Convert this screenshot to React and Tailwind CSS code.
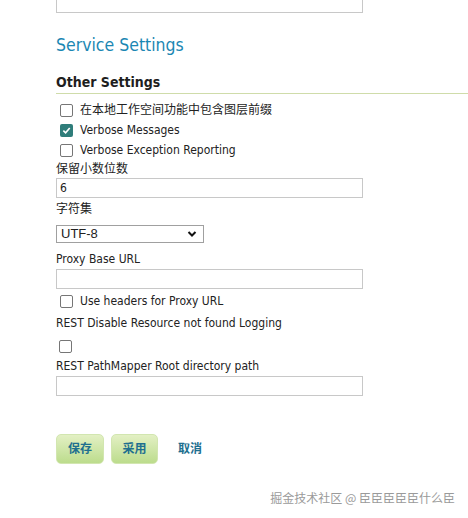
import React from "react";

const font = { fontFamily: '"DejaVu Sans Condensed", "DejaVu Sans", "Noto Sans CJK SC", sans-serif' };

function Check({ checked, label }) {
  return (
    <label className="flex items-center h-5 pl-1 gap-[7px]">
      {checked ? (
        <span className="w-[13px] h-[13px] rounded-[2px] bg-[#2f7d7a] flex items-center justify-center">
          <svg width="9" height="9" viewBox="0 0 10 10">
            <path d="M1.5 5.2 L4 7.6 L8.6 2.2" stroke="white" strokeWidth="1.8" fill="none" />
          </svg>
        </span>
      ) : (
        <span className="w-[13px] h-[13px] rounded-[2px] border border-[#767676] bg-white" />
      )}
      {label && <span className="leading-[20px]">{label}</span>}
    </label>
  );
}

function TextInput({ value }) {
  return (
    <div className="w-[307px] h-[20px] border border-[#c8c8c8] bg-white flex items-center px-[3px] text-[12px] text-[#222]">
      {value}
    </div>
  );
}

export default function App() {
  return (
    <div className="relative w-[468px] h-[518px] bg-white overflow-hidden text-[12px] text-[#222]" style={font}>
      <div className="pl-[56px]">
        <div className="w-[307px] h-[13px] border border-t-0 border-[#c8c8c8]" />
        <h2 className="mt-[20px] text-[17.5px] leading-[24px] text-[#1b87b3]">Service Settings</h2>
        <div className="mt-[15px] border-b border-[#cfdcaa] pb-[1px]">
          <h3 className="text-[14px] font-bold leading-[20px] text-[#1e1e1e]">Other Settings</h3>
        </div>
        <div className="mt-[6px] flex flex-col">
          <Check label="在本地工作空间功能中包含图层前缀" />
          <Check checked label="Verbose Messages" />
          <Check label="Verbose Exception Reporting" />
          <div className="h-[18px] leading-[18px]">保留小数位数</div>
          <TextInput value="6" />
          <div className="mt-[1px] h-[20px] leading-[20px]">字符集</div>
          <div className="mt-[6px] w-[148px] h-[18px] border border-[#a0a0a0] flex items-center justify-between pl-[4px] pr-[6px] text-[13px]" style={{ fontFamily: '"Liberation Sans", sans-serif' }}>
            <span>UTF-8</span>
            <svg width="10" height="8" viewBox="0 0 10 8">
              <path d="M1.5 2 L5 5.5 L8.5 2" stroke="#111" strokeWidth="2" fill="none" />
            </svg>
          </div>
          <div className="mt-[6px] h-[20px] leading-[20px]">Proxy Base URL</div>
          <TextInput />
          <div className="mt-[2px]"><Check label="Use headers for Proxy URL" /></div>
          <div className="mt-[2px] h-[20px] leading-[20px]">REST Disable Resource not found Logging</div>
          <div className="mt-[3px] h-[20px] flex items-center pl-[3px]">
            <span className="w-[13px] h-[13px] rounded-[2px] border border-[#767676] bg-white" />
          </div>
          <div className="h-[20px] leading-[20px]">REST PathMapper Root directory path</div>
          <TextInput />
        </div>
        <div className="mt-[38px] flex items-center gap-[7px]">
          <button className="w-[48px] h-[30px] rounded-[5px] bg-gradient-to-b from-[#e3f0c4] to-[#bcdc8c] border border-[#d2e6b0] text-[#1e6f8f] font-bold text-[12px]">保存</button>
          <button className="w-[47px] h-[30px] rounded-[5px] bg-gradient-to-b from-[#e3f0c4] to-[#bcdc8c] border border-[#d2e6b0] text-[#1e6f8f] font-bold text-[12px]">采用</button>
          <span className="ml-[13px] text-[#1e6f8f] font-bold text-[12px]">取消</span>
        </div>
      </div>
      <div className="absolute right-[13px] top-[489px] text-[12px] text-[#9a9a9a]" style={{ fontFamily: '"Noto Sans CJK SC", sans-serif' }}>
        掘金技术社区 @ 臣臣臣臣臣什么臣
      </div>
    </div>
  );
}
